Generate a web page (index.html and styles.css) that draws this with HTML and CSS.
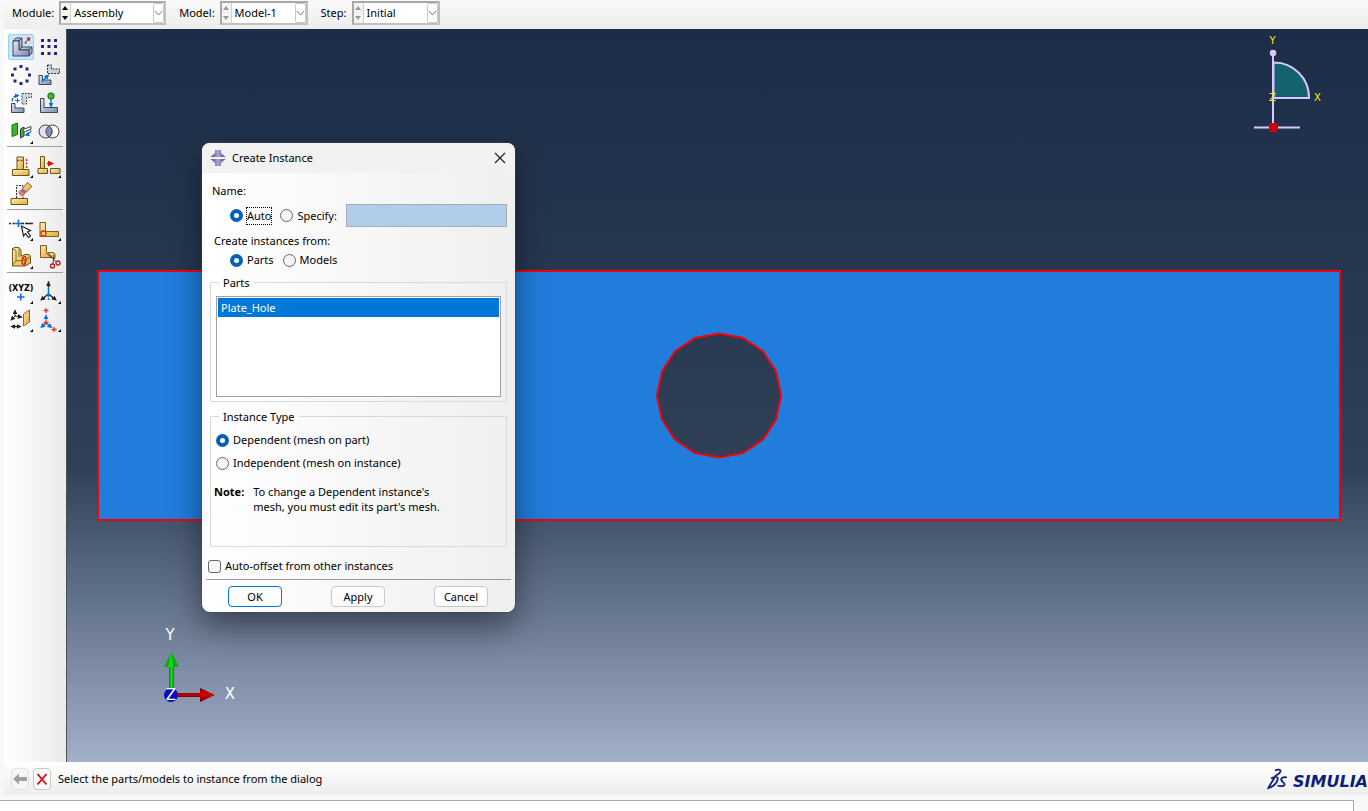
FILE: index.html
```html
<!DOCTYPE html>
<html lang="en">
<head>
<meta charset="utf-8">
<title>Assembly - Model-1</title>
<link rel="stylesheet" href="styles.css">
</head>
<body>
<svg class="defs" width="0" height="0" aria-hidden="true">
  <defs>
    <linearGradient id="steel" x1="0" y1="0" x2="1" y2="1"><stop offset="0" stop-color="#e0e7f4"/><stop offset="1" stop-color="#7c8db2"/></linearGradient>
    <linearGradient id="brass" x1="0" y1="0" x2="1" y2="1"><stop offset="0" stop-color="#fff0b0"/><stop offset="1" stop-color="#d8ae3c"/></linearGradient>
    <linearGradient id="orange" x1="0" y1="0" x2="1" y2="1"><stop offset="0" stop-color="#ffe2a0"/><stop offset="1" stop-color="#e8a23c"/></linearGradient>
    <linearGradient id="purple"><stop offset="0" stop-color="#45458e"/><stop offset=".5" stop-color="#a8a8d2"/><stop offset="1" stop-color="#45458e"/></linearGradient>
    <linearGradient id="greenShaft"><stop offset="0" stop-color="#078a07"/><stop offset=".5" stop-color="#14e014"/><stop offset="1" stop-color="#078a07"/></linearGradient>
    <linearGradient id="redShaft" x1="0" y1="0" x2="0" y2="1"><stop offset="0" stop-color="#7c0000"/><stop offset=".45" stop-color="#d80000"/><stop offset="1" stop-color="#6a0000"/></linearGradient>
    <marker id="tipBlue" viewBox="0 0 6 6" refX="4" refY="3" markerWidth="5" markerHeight="5" markerUnits="userSpaceOnUse" orient="auto-start-reverse"><path d="M0 0L6 3L0 6Z" fill="#0a6fd6"/></marker>
    <marker id="tipBlack" viewBox="0 0 6 6" refX="4" refY="3" markerWidth="5" markerHeight="5" markerUnits="userSpaceOnUse" orient="auto-start-reverse"><path d="M0 0L6 3L0 6Z" fill="#222"/></marker>
    <marker id="tipRed" viewBox="0 0 6 6" refX="4" refY="3" markerWidth="6" markerHeight="6" markerUnits="userSpaceOnUse" orient="auto"><path d="M0 0L6 3L0 6Z" fill="#d8140a"/></marker>
  </defs>
</svg>
<div class="app">
  <header class="context-bar">
    <div class="field">
      <label for="module">Module:</label>
      <div class="combo combo-module">
        <button class="spin" aria-label="Step module"><svg viewBox="0 0 8 20"><path d="M4 3L7 7H1ZM4 17L7 13H1Z"/></svg></button>
        <select id="module"><option>Assembly</option></select>
        <svg class="chevron" viewBox="0 0 11 21"><path d="M1 8L5.500 13L10 8"/></svg>
      </div>
    </div>
    <div class="field">
      <label for="model">Model:</label>
      <div class="combo combo-model">
        <button class="spin off" aria-label="Step model"><svg viewBox="0 0 8 20"><path d="M4 3L7 7H1ZM4 17L7 13H1Z"/></svg></button>
        <select id="model"><option>Model-1</option></select>
        <svg class="chevron" viewBox="0 0 11 21"><path d="M1 8L5.500 13L10 8"/></svg>
      </div>
    </div>
    <div class="field">
      <label for="step">Step:</label>
      <div class="combo combo-step">
        <button class="spin off" aria-label="Step through steps"><svg viewBox="0 0 8 20"><path d="M4 3L7 7H1ZM4 17L7 13H1Z"/></svg></button>
        <select id="step"><option>Initial</option></select>
        <svg class="chevron" viewBox="0 0 11 21"><path d="M1 8L5.500 13L10 8"/></svg>
      </div>
    </div>
  </header>

  <main class="workspace">
    <nav class="toolbox" aria-label="Assembly tools">
      <div class="tools">
        <button class="tool active" aria-label="Create instance"><svg viewBox="1 1 26 26">
          <g fill="url(#steel)" stroke="#3c4658"><path d="M6 8L9 5H15L12 8Z"/><path d="M12 8L15 5V14L12 17Z"/><path d="M12 17L15 14H25L22 17Z"/><path d="M22 17L25 14V20L22 23Z"/><path d="M6 8H12V17H22V23H6Z"/></g>
          <path d="M18.500 11C18.500 8.500 19.500 7.500 21.500 6.500" fill="none" stroke="#e01810" stroke-width="1.500" stroke-dasharray="3 1"/><path d="M19.500 4.500L23.500 4.500L22.500 8.500Z" fill="#e01810"/></svg></button>
        <button class="tool" aria-label="Linear pattern"><svg viewBox="0 0 28 28"><path fill="#26267c" d="M6 6h3v3h-3zM12.500 6h3v3h-3zM19 6h3v3h-3zM6 12h3v3h-3zM12.500 12h3v3h-3zM19 12h3v3h-3zM6 19h3v3h-3zM12.500 19h3v3h-3zM19 19h3v3h-3z"/></svg></button>
        <button class="tool" aria-label="Radial pattern"><svg viewBox="0 0 28 28"><path fill="#26267c" d="M12.500 4h3v3h-3zM18.500 6.500h3v3h-3zM21 12.500h3v3h-3zM18.500 18.500h3v3h-3zM12.500 21h3v3h-3zM6.500 18.500h3v3h-3zM4 12.500h3v3h-3zM6.500 6.500h3v3h-3z"/></svg></button>
        <button class="tool" aria-label="Translate instance"><svg viewBox="0 0 28 28">
          <path d="M12.500 4H16.500V8H24.500V12.500H12.500Z" fill="#cdd3de" stroke="#333" stroke-dasharray="2 1"/><path d="M4 14.500H7.500V19H16V23.500H4Z" fill="url(#steel)" stroke="#3c4658"/><path d="M6.500 21L13 14.500" stroke="#0a6fd6" stroke-width="1.500" marker-end="url(#tipBlue)"/></svg></button>
        <button class="tool" aria-label="Rotate instance"><svg viewBox="0 0 28 28">
          <path d="M15 4.500H24.500V8.500H19.500V15H15Z" fill="#d0d4dc" stroke="#555" stroke-dasharray="2 1"/><path d="M4.500 14.500H8V19H17V23.500H4.500Z" fill="url(#steel)" stroke="#3c4658"/><path d="M5.500 12C5 8.500 7 7 11 6.500" fill="none" stroke="#0a6fd6" stroke-width="1.500" stroke-dasharray="3 1" marker-end="url(#tipBlue)"/><path d="M8 11.500H13M10.500 9V14" stroke="#0a6fd6"/></svg></button>
        <button class="tool" aria-label="Translate to"><svg viewBox="0 0 28 28">
          <path d="M5.500 9.500H9V18.500H22.500V23.500H5.500Z" fill="url(#steel)" stroke="#3c4658"/><path d="M16 10V17" stroke="#0a6fd6" stroke-width="1.300" marker-end="url(#tipBlue)"/><circle cx="16" cy="7" r="3.200" fill="#3fb52a" stroke="#18701a"/></svg></button>
        <button class="tool" aria-label="Position constraints"><svg viewBox="0 0 28 28">
          <path d="M5 8L10.500 6V17.500L5 19.500Z" fill="#37b82a" stroke="#1c6e18"/><path d="M13.500 12L17 10V19L13.500 21Z" fill="#37b82a" stroke="#333"/><path d="M17 12L24 9.500V12L17 15" fill="#fff" stroke="#444"/><path d="M24 13C23.500 15.500 22 17 19 18" fill="none" stroke="#0a6fd6" stroke-width="1.200" marker-end="url(#tipBlue)"/><path d="M23 27L26 24V27Z"/></svg></button>
        <button class="tool" aria-label="Merge or cut"><svg viewBox="0 0 28 28"><circle cx="17.500" cy="14.500" r="6.500" fill="#fff" stroke="#444"/><circle cx="10.500" cy="14.500" r="6.500" fill="#dfe3ed" stroke="#444"/><path d="M14 9A6.500 6.500 0 0 1 14 20A6.500 6.500 0 0 1 14 9Z" fill="#8391b8" stroke="#444"/></svg></button>
      </div>
      <hr>
      <div class="tools">
        <button class="tool" aria-label="Create feature"><svg viewBox="0 0 28 28"><g fill="url(#brass)" stroke="#6b5518"><path d="M5.500 17.500H22V23.500H5.500Z"/><path d="M10 5H16.500V17.500H10Z"/></g><path d="M10 8.500H17M19.500 7V17" stroke="#e01810" stroke-width="1.300" stroke-dasharray="2 1.500"/><path d="M23 26L26 23V26Z"/></svg></button>
        <button class="tool" aria-label="Replace feature"><svg viewBox="0 0 28 28"><g fill="url(#brass)" stroke="#6b5518"><path d="M3 16.500H12.500V21.500H3Z"/><path d="M5.500 4.500H9.500V16.500H5.500Z"/><path d="M15.500 16.500H25V21.500H15.500Z"/></g><path d="M12 11.500H17" stroke="#d8140a" stroke-width="1.500" marker-end="url(#tipRed)"/><path d="M23 26L26 23V26Z"/></svg></button>
        <button class="tool" aria-label="Delete feature"><svg viewBox="0 0 28 28"><path d="M9.500 18V5.500H16V18" fill="#eee" stroke="#333" stroke-dasharray="2 1"/><path d="M4 18.500H20.500V24.500H4Z" fill="url(#brass)" stroke="#6b5518"/><path d="M15.500 8.500L20.500 2.500L25 6.500L19.500 12Z" fill="url(#orange)" stroke="#8b6420"/><path d="M14 10L15.500 8.500L19.500 12L18 13.500Z" fill="#6f7f9e"/><path d="M14 10L18 13.500L15.500 15.500C13.500 15.500 12 13.500 12 12Z" fill="#e98288" stroke="#b75a60"/></svg></button>
      </div>
      <hr>
      <div class="tools">
        <button class="tool" aria-label="Partition edge"><svg viewBox="0 0 28 28"><path d="M2 8.500H4M5.500 8.500H7.500M14 8.500H17M18 8.500H26" stroke="#222" stroke-width="1.500"/><path d="M7.500 8.500H14.500M11.500 4.500V12" stroke="#0a6fd6" stroke-width="1.500"/><path d="M14.500 11L23.500 15.500L20.500 17L23.500 21L21.500 22.500L18.500 18.500L16.500 21Z" fill="#fff" stroke="#222" stroke-width="1.200"/><path d="M23 26L26 23V26Z"/></svg></button>
        <button class="tool" aria-label="Partition face"><svg viewBox="0 0 28 28"><path d="M5 7.500H10.500V16.500H23.500V21.500H5Z" fill="url(#brass)" stroke="#7a6020"/><circle cx="8.500" cy="18.500" r="2.500" fill="none" stroke="#e03010" stroke-width="1.300"/><path d="M23 26L26 23V26Z"/></svg></button>
        <button class="tool" aria-label="Partition cell"><svg viewBox="0 0 28 28"><path d="M5.500 5.500L8 4.500H12L14 7V13L18 11.500H22L23.500 13V20L18 23H5.500Z" fill="url(#brass)" stroke="#6b5518"/><path d="M5.500 5.500L9 7.500V18L18 17V23M9 18L5.500 22M12 5V14M14 13L18 17L23 14" fill="none" stroke="#8b6e22"/><ellipse cx="17" cy="17.500" rx="1.800" ry="4" fill="none" stroke="#e01810" stroke-width="1.300" transform="rotate(10 17 17.500)"/><path d="M23 26L26 23V26Z"/></svg></button>
        <button class="tool" aria-label="Trim part"><svg viewBox="0 0 28 28"><path d="M5.500 2.500H11.500V9.500L17 14.500L5.500 14.500Z" fill="url(#orange)" stroke="#7a6020"/><path d="M13 9.500H18L20 11V15.500H18Z" fill="url(#orange)" stroke="#7a6020"/><path d="M11.500 10L21 18.500M19 12L18 21" stroke="#444"/><circle cx="17.500" cy="23" r="2" fill="none" stroke="#b81c20" stroke-width="1.300"/><circle cx="23" cy="20" r="2" fill="none" stroke="#b81c20" stroke-width="1.300"/></svg></button>
      </div>
      <hr>
      <div class="tools">
        <button class="tool" aria-label="Create datum point"><svg viewBox="0 0 28 28"><text class="xyz" x="14" y="13" text-anchor="middle">(XYZ)</text><path d="M10 19H17.500M13.750 15.500V22.500" stroke="#0a6fd6" stroke-width="1.500"/><path d="M23 26L26 23V26Z"/></svg></button>
        <button class="tool" aria-label="Create datum axes"><svg viewBox="0 0 28 28"><path d="M13.500 16L6.500 21.500" stroke="#222" stroke-width="1.500" marker-end="url(#tipBlack)"/><path d="M13.500 16L20.500 21.500" stroke="#222" stroke-width="1.500" marker-end="url(#tipBlack)"/><path d="M13.500 3V23" stroke="#0a6fd6" stroke-width="1.500" stroke-dasharray="16 1 2 1"/><path d="M13.500 9V5" stroke="#222" marker-end="url(#tipBlack)"/><path d="M23 26L26 23V26Z"/></svg></button>
        <button class="tool" aria-label="Create datum plane"><svg viewBox="0 0 28 28"><g stroke="#222" fill="none"><path d="M8 10V5" marker-end="url(#tipBlack)"/><path d="M8 10L14 11" marker-end="url(#tipBlack)"/><path d="M8 10L4.500 13.500" marker-end="url(#tipBlack)"/><path d="M5 20.500H13" stroke-width="1.300" marker-start="url(#tipBlack)" marker-end="url(#tipBlack)"/></g><path d="M16.500 8L22.500 4V16L16.500 20Z" fill="url(#orange)" stroke="#7a6a48"/><path d="M23 26L26 23V26Z"/></svg></button>
        <button class="tool" aria-label="Create datum system"><svg viewBox="0 0 28 28"><g stroke="#0a6fd6"><path d="M11 14V10" marker-end="url(#tipBlue)"/><path d="M11 17L6.500 21" stroke-width="1.300" marker-end="url(#tipBlue)"/><path d="M11 17L16 21" stroke-width="1.300" marker-end="url(#tipBlue)"/></g><path d="M8.500 4.500H13.500M11 2V7M8.500 16.500H13.500M11 14V19M16.500 23.500H21.500M19 21V26" stroke="#f03020" stroke-width="1.300"/><path d="M23 26L26 23V26Z"/></svg></button>
      </div>
    </nav>

    <section class="viewport" aria-label="Viewport">
      <svg class="scene" viewBox="0 0 1301 733" preserveAspectRatio="xMidYMid slice">
        <path fill="#207ddb" stroke="#f40009" stroke-width="2" fill-rule="evenodd" d="M31 242H1273V491H31Z M652 304.500L676 309L696 322.500L709 342.500L714 366.500L709 390.500L696 410.500L676 424L652 428.500L628 424L608 410.500L595 390.500L590 366.500L595 342.500L608 322.500L628 309Z"/>
        <g>
          <path d="M1206.500 69V33.500A35 35 0 0 1 1242 69Z" fill="#14616f" stroke="#d9c8ff" stroke-width="2"/>
          <path d="M1206 24V99M1187 98.500H1233" stroke="#d9c8ff" stroke-width="2"/>
          <circle cx="1206" cy="24" r="3.300" fill="#d9c8ff"/>
          <rect x="1202" y="94" width="9" height="9" fill="#cc0000"/>
          <g class="axis-small" text-anchor="middle"><text x="1205.500" y="15">Y</text><text x="1205.500" y="72">Z</text><text x="1250.500" y="72">X</text></g>
        </g>
        <g>
          <rect x="102" y="636" width="5" height="26" fill="url(#greenShaft)"/>
          <path d="M104.500 623L112 638H97Z" fill="#12a812"/><path d="M104.500 623L106 638H101Z" fill="#19d619"/>
          <rect x="108" y="664" width="28" height="4" fill="url(#redShaft)"/>
          <path d="M133 659L148 666L133 673Z" fill="url(#redShaft)"/>
          <circle cx="104" cy="666" r="7" fill="#0a0ac4"/>
          <g class="axis-large" text-anchor="middle"><text x="103" y="611">Y</text><text x="163" y="670">X</text><text x="104" y="671">Z</text></g>
        </g>
      </svg>

      <form class="dialog" role="dialog" aria-labelledby="dialog-title" onsubmit="return false">
        <div class="title-bar">
          <svg class="diamond" viewBox="0 0 16 16"><path d="M5 0H11V3L15.500 7H.5L5 3Z" fill="url(#purple)"/><path d="M.5 9H15.500L11 13V16H5V13Z" fill="url(#purple)"/></svg>
          <h1 id="dialog-title">Create Instance</h1>
          <button class="close" type="button" aria-label="Close"><svg viewBox="0 0 12 12"><path d="M1 1L11 11M11 1L1 11"/></svg></button>
        </div>
        <div class="dialog-body">
          <p class="name-label">Name:</p>
          <div class="name-row">
            <label><input type="radio" name="naming" checked><span class="focused">Auto</span></label>
            <label><input type="radio" name="naming"><span>Specify:</span></label>
            <input class="name-box" type="text" aria-label="Instance name" disabled>
          </div>
          <p class="from-label">Create instances from:</p>
          <div class="from-row">
            <label><input type="radio" name="source" checked><span>Parts</span></label>
            <label><input type="radio" name="source"><span>Models</span></label>
          </div>
          <fieldset class="parts">
            <legend>Parts</legend>
            <ul class="list"><li>Plate_Hole</li></ul>
          </fieldset>
          <fieldset class="type">
            <legend>Instance Type</legend>
            <label><input type="radio" name="type" checked><span>Dependent (mesh on part)</span></label>
            <label><input type="radio" name="type"><span>Independent (mesh on instance)</span></label>
            <div class="note"><strong>Note:</strong><p>To change a Dependent instance's<br>mesh, you must edit its part's mesh.</p></div>
          </fieldset>
          <label class="offset"><input type="checkbox"><span>Auto-offset from other instances</span></label>
        </div>
        <div class="actions">
          <button type="submit" class="default">OK</button>
          <button type="button">Apply</button>
          <button type="button">Cancel</button>
        </div>
      </form>
    </section>
  </main>

  <footer class="prompt">
    <button class="prompt-btn" aria-label="Previous" disabled><svg viewBox="0 0 16 14"><path d="M1 7L7 1.500V5H15V9H7V12.500Z" fill="#a0a0a0"/></svg></button>
    <button class="prompt-btn" aria-label="Cancel procedure"><svg viewBox="0 0 16 14"><path d="M3.500 2L12.500 12.500M12.500 2L3.500 12.500" stroke="#e8000c" stroke-width="1.800"/></svg></button>
    <p>Select the parts/models to instance from the dialog</p>
    <div class="brand">
      <svg viewBox="0 0 22 22"><g fill="none" stroke="#0b1f7a" stroke-width="1.800"><path d="M8 2.500C11 1 14 1.500 13.500 3.500C13 5.500 10.500 6.500 8 8"/><path d="M4 10.500C9 7.500 11.500 9 10.500 12C9.500 15.500 6 18.500 1.500 20C3 17 5 13.500 7.500 10"/><path d="M20 9.500C16 8.500 13.500 10 14.500 12.500C15.500 14.500 18.500 15 17.500 17C16.500 18.500 13 18.500 10.500 17.500"/></g></svg>
      <span>SIMULIA</span>
    </div>
  </footer>
  <div class="message-area"><div class="message-box"></div></div>
</div>
</body>
</html>
```

FILE: styles.css
```css
* { box-sizing: border-box; }
html, body { height: 100%; margin: 0; }
body, button, select, input { font: 11px/18px "Noto Sans", "Open Sans", sans-serif; color: #000; }
body { background: #f8f8f8; overflow: hidden; }
p, h1, ul { margin: 0; padding: 0; }
button { padding: 0; }
.defs { position: absolute; }

.app { display: flex; flex-direction: column; height: 100vh; padding-left: 4px; }

/* context bar */
.context-bar { display: flex; gap: 13px; height: 29px; flex: none; padding: 1px 0 4px 8px; background: linear-gradient(#fafafa, #ededed); }
.field { display: flex; align-items: center; gap: 5px; }
.combo { position: relative; display: flex; height: 24px; border: 2px solid #a8a8a8; border-right-color: #c0c0c0; border-bottom-color: #c0c0c0; background: #fff; }
.combo-module { width: 107px; }
.combo-model, .combo-step { width: 88px; }
.spin { width: 10px; flex: none; border: 0; border-right: 1px solid #d0d0d0; background: #f4f4f4; fill: #000; }
.spin svg { display: block; width: 8px; height: 20px; }
.spin.off { fill: #9a9a9a; }
.combo select { appearance: none; flex: 1; min-width: 0; border: 0; padding: 0 12px 0 3px; background: transparent; }
.chevron { position: absolute; right: 0; top: 0; width: 11px; height: 20px; border: 1px solid #c8c8c8; border-radius: 2px; background: #fff; fill: none; stroke: #555; pointer-events: none; }

/* workspace */
.workspace { display: flex; flex: 1; min-height: 0; }
.toolbox { width: 62px; flex: none; padding: 4px 3px; background: linear-gradient(90deg, #fff, #ebebeb); }
.toolbox hr { height: 1px; margin: 1px 0 5px; border: 0; background: #a0a0a0; }
.tools { display: grid; grid-template-columns: 28px 28px; }
.tool { width: 28px; height: 28px; border: 0; background: none; }
.tool svg { display: block; width: 28px; height: 28px; }
.tool.active { padding: 1px; }
.tool.active svg { width: 26px; height: 26px; border-radius: 3px; background: #cce5fa; box-shadow: inset 0 0 0 1px #99cdf5; }
.xyz { font: bold 8px "DejaVu Sans", sans-serif; }

.viewport { position: relative; flex: 1; min-width: 0; overflow: hidden; border-left: 1px solid #4c5058; background: linear-gradient(#1b2d47 0%, #2f4057 60%, #a2b0c9 100%); }
.scene { display: block; width: 100%; height: 100%; }
.axis-small { font: 10px "DejaVu Sans", sans-serif; fill: #ffee00; }
.axis-large { font: 15px "DejaVu Sans", sans-serif; fill: #fff; }

/* dialog */
.dialog { position: absolute; left: 135px; top: 114px; width: 313px; border-radius: 8px; overflow: hidden; background: linear-gradient(90deg, #fff, #efefef); box-shadow: 0 0 0 1px rgba(60, 70, 85, .5), 0 14px 32px rgba(0, 0, 0, .45); }
.title-bar { display: flex; align-items: center; height: 30px; padding: 0 9px 0 8px; background: #f2f2f2; }
.diamond { width: 16px; height: 16px; }
.title-bar h1 { flex: 1; margin-left: 6px; font-size: 11px; font-weight: 400; }
.close { width: 12px; height: 12px; border: 0; background: none; }
.close svg { display: block; width: 12px; height: 12px; fill: none; stroke: #222; stroke-width: 1.2; }
.dialog-body { display: flex; flex-direction: column; padding: 9px 8px 4px; }
.dialog label { display: flex; align-items: center; gap: 4px; }
.dialog input[type="radio"], .dialog input[type="checkbox"] { appearance: none; width: 13px; height: 13px; margin: 0; border: 1px solid #666; border-radius: 50%; background: #f6f6f6; }
.dialog input[type="radio"]:checked { border: 4px solid #0560b6; background: #fff; }
.dialog input[type="checkbox"] { border-radius: 3px; }
.name-label { padding-left: 2px; }
.name-row { display: flex; height: 23px; gap: 9px; margin-top: 4px; padding-left: 20px; }
.focused { line-height: 16px; outline: 1px dotted #000; }
.name-box { width: 164px; min-width: 0; margin-left: auto; border: 1px solid #a5adb8; background: #b1cdeb; }
.from-label { margin-top: 5px; padding-left: 4px; }
.from-row { display: flex; gap: 9px; margin-top: 1px; padding-left: 20px; }
fieldset { min-width: 0; margin: 0; border: 1px solid #dadada; }
legend { margin-left: 3px; padding: 2px 4px 0; line-height: 14px; }
.parts { margin-top: 5px; padding: 6px 5px 4px; }
.list { height: 101px; padding: 1px; border: 1px solid #a0a0a6; background: #fff; list-style: none; }
.list li { padding: 0 3px; line-height: 19px; background: #0078d7; color: #fff; }
.type { display: flex; flex-direction: column; gap: 5px; height: 139px; margin-top: 6px; padding: 7px 5px; }
.note { display: flex; gap: 9px; margin: 7px 0 0 -2px; line-height: 15px; }
.offset { margin: 10px 0 0 -2px; }
.actions { display: flex; justify-content: space-between; margin: 0 4px; padding: 6px 23px 5px 22px; border-top: 1px solid #9a9a96; }
.actions button { width: 54px; height: 21px; border: 1px solid #c8c8c8; border-radius: 4px; background: #fdfdfd; }
.actions .default { border-color: #0078d4; }

/* prompt and message areas */
.prompt { display: flex; align-items: center; flex: none; height: 33px; padding-left: 7px; background: linear-gradient(#fff, #ededed); }
.prompt-btn { display: grid; place-items: center; width: 18px; height: 22px; margin-right: 4px; border: 1px solid #c8c8c8; border-radius: 4px; background: #fdfdfd; }
.prompt-btn:disabled { border-color: #e2e2e2; background: #f6f6f6; }
.prompt-btn svg { width: 16px; height: 14px; }
.prompt p { flex: 1; margin-left: 3px; white-space: nowrap; }
.brand { display: flex; align-items: flex-end; gap: 4px; }
.brand svg { width: 22px; height: 22px; }
.brand span { font: italic bold 16px/16px "DejaVu Sans", sans-serif; color: #0b1f7a; }
.message-area { flex: none; height: 16px; margin-left: -4px; padding: 5px 14px 0 0; }
.message-box { height: 11px; border: 1px solid #a8a8a8; border-width: 1px 1px 0 0; background: #fff; }
```
